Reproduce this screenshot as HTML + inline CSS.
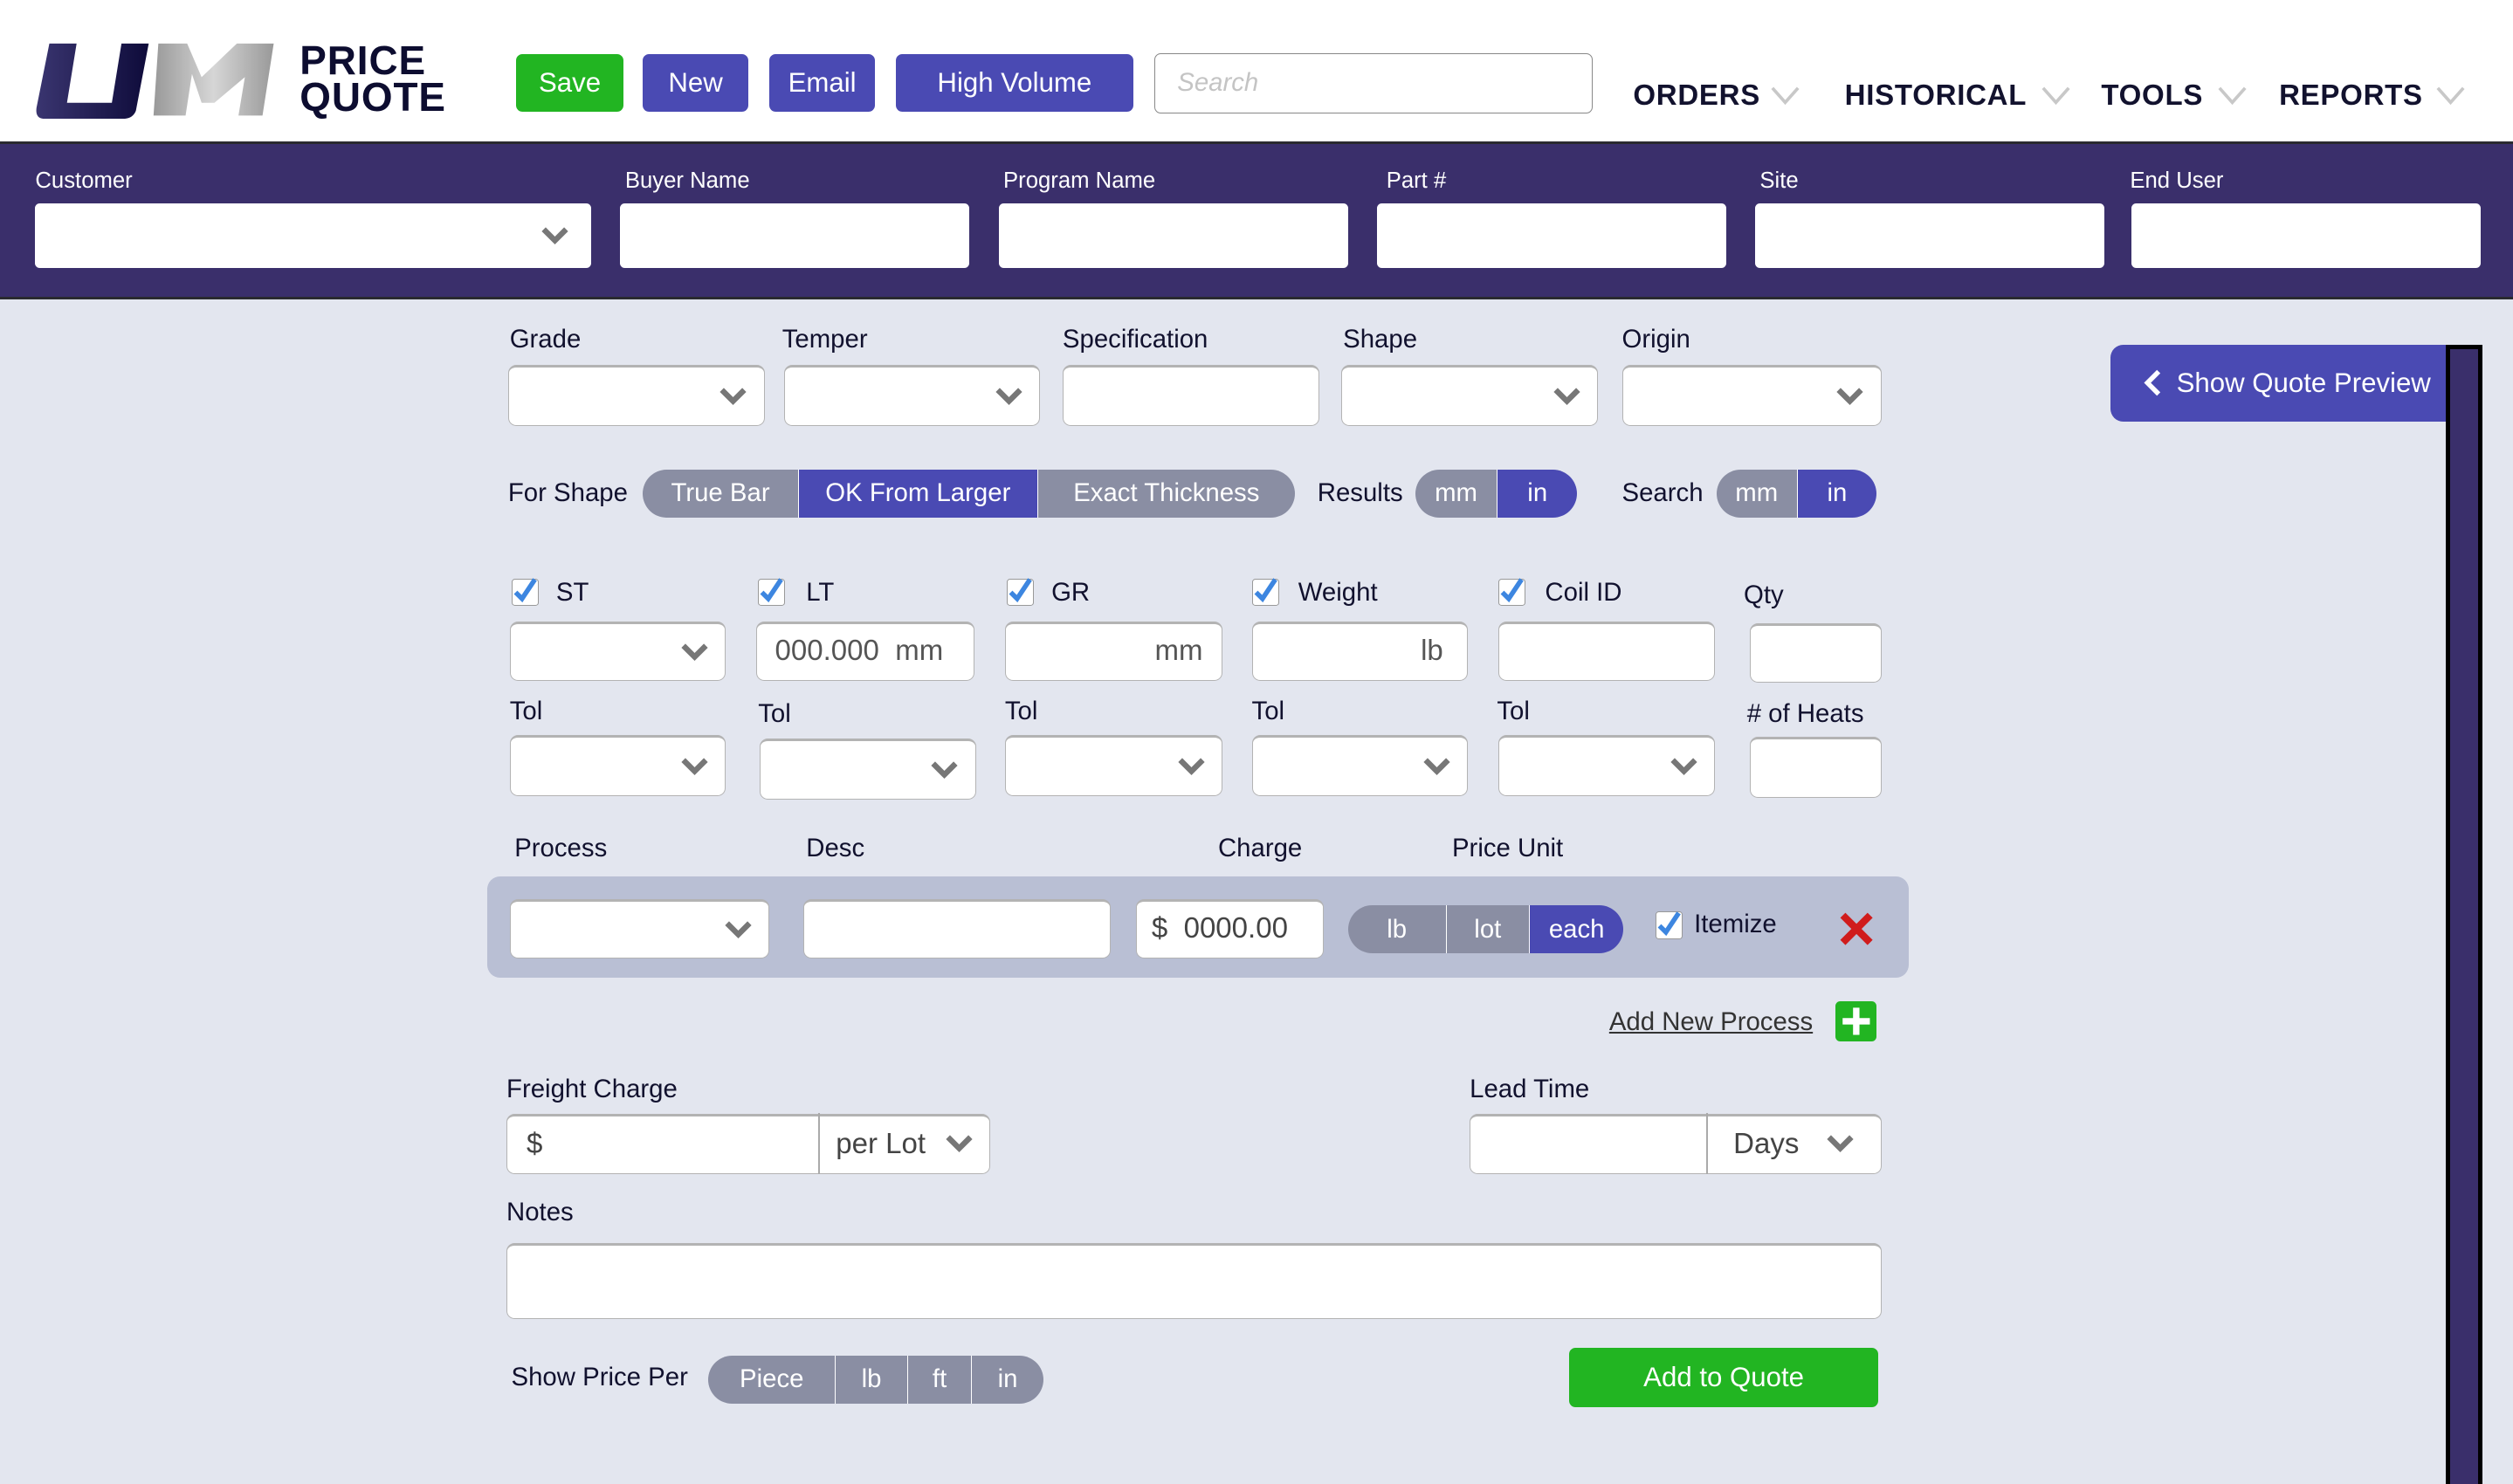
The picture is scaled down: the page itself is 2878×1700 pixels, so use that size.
<!DOCTYPE html>
<html><head><meta charset="utf-8"><style>
*{box-sizing:border-box;margin:0;padding:0}
html,body{width:2878px;height:1700px;overflow:hidden;background:#e3e6ef}
#w{zoom:1.8355;position:relative;width:1568px;height:927px;font-family:"Liberation Sans",sans-serif;color:#11112e}
.a{position:absolute}
.t{position:absolute;font-size:16px;line-height:20px;white-space:nowrap}
.in{position:absolute;background:#fff;border:1px solid #b3b3b3;border-top-width:2px;border-radius:5px}
.cv{position:absolute;right:10px;top:50%;margin-top:-6px;width:18px;height:12px}
.btn{position:absolute;color:#fff;font-size:17px;text-align:center;border-radius:4px}
.pill{position:absolute;display:flex;border-radius:16px;overflow:hidden;color:#fff;font-size:16px}
.pill div{background:#8a8ea3;display:flex;align-items:center;justify-content:center;border-left:1px solid #fff}
.pill div:first-child{border-left:none}
.pill .on{background:#4a4ab3}
.cb{position:absolute;width:17px;height:17px;border:1px solid #999;border-radius:2px;background:#fff}
.nav{position:absolute;top:49px;font-size:18px;font-weight:bold;letter-spacing:0.4px;color:#12122e}
.bl{position:absolute;color:#fff;font-size:14px;top:105px}
.bi{position:absolute;top:127px;height:40px;background:#fff;border-radius:3px}
</style></head><body><div id="w">
<svg width="0" height="0" style="position:absolute"><defs>
<symbol id="ch" viewBox="0 0 18 12"><path d="M2 2 L9 9 L16 2" fill="none" stroke="#777" stroke-width="3.5"/></symbol>
<symbol id="ck" viewBox="0 0 17 17"><path d="M3 9 L7 13 L15 1" fill="none" stroke="#3d86e0" stroke-width="3"/></symbol>
</defs></svg>
<!-- header -->
<div class="a" style="left:0;top:0;width:1568px;height:88px;background:#fff"></div>
<svg class="a" style="left:22px;top:26px" width="152" height="48" viewBox="0 0 152 48">
<defs><linearGradient id="g1" x1="0" x2="1"><stop offset="0" stop-color="#3a3570"/><stop offset="1" stop-color="#0e0b3a"/></linearGradient>
<linearGradient id="g2" x1="0" x2="1"><stop offset="0" stop-color="#999"/><stop offset=".5" stop-color="#d6d6d6"/><stop offset="1" stop-color="#999"/></linearGradient></defs>
<path d="M9 1 L26 1 L20 38 L48 38 L54 1 L71 1 L63 43 Q61 48 55 48 L6 48 Q0 48 1 41 Z" fill="url(#g1)"/>
<path d="M77 1 L95 1 L104 22 L126 1 L149 1 L142 46 L127 46 L131 22 L112 38 L104 38 L98 20 L94 46 L74 46 Z" fill="url(#g2)"/>
</svg>
<div class="a" style="left:187px;top:26px;font-size:25px;font-weight:bold;line-height:23px;letter-spacing:0.5px;color:#0d0d30">PRICE<br>QUOTE</div>
<div class="btn" style="left:322px;top:34px;width:67px;height:36px;line-height:36px;background:#22b522">Save</div>
<div class="btn" style="left:401px;top:34px;width:66px;height:36px;line-height:36px;background:#4a4ab3">New</div>
<div class="btn" style="left:480px;top:34px;width:66px;height:36px;line-height:36px;background:#4a4ab3">Email</div>
<div class="btn" style="left:559px;top:34px;width:148px;height:36px;line-height:36px;background:#4a4ab3">High Volume</div>
<div class="a" style="left:720px;top:33px;width:274px;height:38px;border:1px solid #888;border-radius:4px;color:#c4c4c4;font-style:italic;font-size:16px;line-height:36px;padding-left:14px">Search</div>
<div class="nav" style="left:1019px">ORDERS</div><svg class="a" style="left:1105px;top:54px" width="18" height="12"><path d="M1 1 L9 10 L17 1" fill="none" stroke="#c8c8c8" stroke-width="2"/></svg>
<div class="nav" style="left:1151px">HISTORICAL</div><svg class="a" style="left:1274px;top:54px" width="18" height="12"><path d="M1 1 L9 10 L17 1" fill="none" stroke="#c8c8c8" stroke-width="2"/></svg>
<div class="nav" style="left:1311px">TOOLS</div><svg class="a" style="left:1384px;top:54px" width="18" height="12"><path d="M1 1 L9 10 L17 1" fill="none" stroke="#c8c8c8" stroke-width="2"/></svg>
<div class="nav" style="left:1422px">REPORTS</div><svg class="a" style="left:1520px;top:54px" width="18" height="12"><path d="M1 1 L9 10 L17 1" fill="none" stroke="#c8c8c8" stroke-width="2"/></svg>
<!-- band -->
<div class="a" style="left:0;top:88px;width:1568px;height:99px;background:#3a2f6b;border-top:2px solid #2a2a30;border-bottom:2px solid #2a2a30"></div>
<div class="bl" style="left:22px">Customer</div><div class="bi" style="left:22px;width:347px"><svg class="cv" style="right:14px"><use href="#ch"/></svg></div>
<div class="bl" style="left:390px">Buyer Name</div><div class="bi" style="left:387px;width:218px"></div>
<div class="bl" style="left:626px">Program Name</div><div class="bi" style="left:623px;width:218px"></div>
<div class="bl" style="left:865px">Part #</div><div class="bi" style="left:859px;width:218px"></div>
<div class="bl" style="left:1098px">Site</div><div class="bi" style="left:1095px;width:218px"></div>
<div class="bl" style="left:1329px">End User</div><div class="bi" style="left:1330px;width:218px"></div>
<!-- right -->
<div class="a" style="left:1317px;top:215px;width:212px;height:48px;background:#4a4ab3;border-radius:8px 0 0 8px;color:#fff;font-size:17px;line-height:48px;padding-left:41px">Show Quote Preview</div>
<svg class="a" style="left:1336px;top:230px" width="14" height="18"><path d="M11 2 L4 9 L11 16" fill="none" stroke="#fff" stroke-width="3"/></svg>
<div class="a" style="left:1526px;top:215px;width:23px;height:712px;background:#3a2f6b;border:3px solid #000;border-bottom:none"></div>
<!-- grade row -->
<div class="t" style="left:318px;top:202px">Grade</div><div class="in" style="left:317px;top:228px;width:160px;height:38px"><svg class="cv"><use href="#ch"/></svg></div>
<div class="t" style="left:488px;top:202px">Temper</div><div class="in" style="left:489px;top:228px;width:160px;height:38px"><svg class="cv"><use href="#ch"/></svg></div>
<div class="t" style="left:663px;top:202px">Specification</div><div class="in" style="left:663px;top:228px;width:160px;height:38px"></div>
<div class="t" style="left:838px;top:202px">Shape</div><div class="in" style="left:837px;top:228px;width:160px;height:38px"><svg class="cv"><use href="#ch"/></svg></div>
<div class="t" style="left:1012px;top:202px">Origin</div><div class="in" style="left:1012px;top:228px;width:162px;height:38px"><svg class="cv"><use href="#ch"/></svg></div>
<!-- shape row -->
<div class="t" style="left:317px;top:298px">For Shape</div>
<div class="pill" style="left:401px;top:293px;width:407px;height:30px"><div style="width:97px">True Bar</div><div class="on" style="width:149px">OK From Larger</div><div style="width:161px">Exact Thickness</div></div>
<div class="t" style="left:822px;top:298px">Results</div>
<div class="pill" style="left:883px;top:293px;width:101px;height:30px"><div style="width:51px">mm</div><div class="on" style="width:50px">in</div></div>
<div class="t" style="left:1012px;top:298px">Search</div>
<div class="pill" style="left:1071px;top:293px;width:100px;height:30px"><div style="width:50px">mm</div><div class="on" style="width:50px">in</div></div>
<!-- checkbox row -->
<div class="cb" style="left:319px;top:361px"><svg width="17" height="17" style="margin:-1px"><use href="#ck"/></svg></div><div class="t" style="left:347px;top:360px">ST</div>
<div class="cb" style="left:473px;top:361px"><svg width="17" height="17" style="margin:-1px"><use href="#ck"/></svg></div><div class="t" style="left:503px;top:360px">LT</div>
<div class="cb" style="left:628px;top:361px"><svg width="17" height="17" style="margin:-1px"><use href="#ck"/></svg></div><div class="t" style="left:656px;top:360px">GR</div>
<div class="cb" style="left:781px;top:361px"><svg width="17" height="17" style="margin:-1px"><use href="#ck"/></svg></div><div class="t" style="left:810px;top:360px">Weight</div>
<div class="cb" style="left:935px;top:361px"><svg width="17" height="17" style="margin:-1px"><use href="#ck"/></svg></div><div class="t" style="left:964px;top:360px">Coil ID</div>
<div class="t" style="left:1088px;top:362px">Qty</div>
<div class="in" style="left:318px;top:388px;width:135px;height:37px"><svg class="cv"><use href="#ch"/></svg></div>
<div class="in" style="left:472px;top:388px;width:136px;height:37px;font-size:18px;color:#555;line-height:33px;padding-left:11px">000.000&nbsp; mm</div>
<div class="in" style="left:627px;top:388px;width:136px;height:37px;font-size:18px;color:#555;line-height:33px;text-align:right;padding-right:12px">mm</div>
<div class="in" style="left:781px;top:388px;width:135px;height:37px;font-size:18px;color:#555;line-height:33px;text-align:right;padding-right:15px">lb</div>
<div class="in" style="left:935px;top:388px;width:135px;height:37px"></div>
<div class="in" style="left:1092px;top:389px;width:82px;height:37px"></div>
<div class="t" style="left:318px;top:434px">Tol</div><div class="t" style="left:473px;top:436px">Tol</div><div class="t" style="left:627px;top:434px">Tol</div><div class="t" style="left:781px;top:434px">Tol</div><div class="t" style="left:934px;top:434px">Tol</div>
<div class="t" style="left:1090px;top:436px">#&nbsp;of Heats</div>
<div class="in" style="left:318px;top:459px;width:135px;height:38px"><svg class="cv"><use href="#ch"/></svg></div>
<div class="in" style="left:474px;top:461px;width:135px;height:38px"><svg class="cv"><use href="#ch"/></svg></div>
<div class="in" style="left:627px;top:459px;width:136px;height:38px"><svg class="cv"><use href="#ch"/></svg></div>
<div class="in" style="left:781px;top:459px;width:135px;height:38px"><svg class="cv"><use href="#ch"/></svg></div>
<div class="in" style="left:935px;top:459px;width:135px;height:38px"><svg class="cv"><use href="#ch"/></svg></div>
<div class="in" style="left:1092px;top:460px;width:82px;height:38px"></div>
<!-- process -->
<div class="t" style="left:321px;top:520px">Process</div><div class="t" style="left:503px;top:520px">Desc</div><div class="t" style="left:760px;top:520px">Charge</div><div class="t" style="left:906px;top:520px">Price Unit</div>
<div class="a" style="left:304px;top:547px;width:887px;height:63px;background:#b9bfd4;border-radius:8px"></div>
<div class="in" style="left:318px;top:561px;width:162px;height:37px"><svg class="cv"><use href="#ch"/></svg></div>
<div class="in" style="left:501px;top:561px;width:192px;height:37px"></div>
<div class="in" style="left:709px;top:561px;width:117px;height:37px;font-size:18px;color:#444;line-height:33px;padding-left:9px">$&nbsp; 0000.00</div>
<div class="pill" style="left:841px;top:565px;width:172px;height:30px"><div style="width:61px">lb</div><div style="width:52px">lot</div><div class="on" style="width:59px">each</div></div>
<div class="cb" style="left:1033px;top:569px"><svg width="17" height="17" style="margin:-1px"><use href="#ck"/></svg></div><div class="t" style="left:1057px;top:567px">Itemize</div>
<svg class="a" style="left:1147px;top:568px" width="23" height="23"><path d="M3 3 L20 20 M20 3 L3 20" stroke="#d01c1c" stroke-width="4.5"/></svg>
<div class="t" style="left:1004px;top:628px;color:#333;text-decoration:underline">Add New Process</div>
<div class="a" style="left:1145px;top:625px;width:26px;height:25px;background:#22b522;border-radius:3px"><svg width="26" height="25"><path d="M13 4 V21 M4.5 12.5 H21.5" stroke="#fff" stroke-width="4"/></svg></div>
<!-- freight -->
<div class="t" style="left:316px;top:670px">Freight Charge</div>
<div class="in" style="left:316px;top:695px;width:302px;height:38px;font-size:18px;color:#444;line-height:34px"><span style="position:absolute;left:12px">$</span><div class="a" style="left:194px;top:-2px;width:1px;height:38px;background:#aaa"></div><span style="position:absolute;left:205px">per Lot</span><svg class="cv" style="margin-top:-7px"><use href="#ch"/></svg></div>
<div class="t" style="left:917px;top:670px">Lead Time</div>
<div class="in" style="left:917px;top:695px;width:257px;height:38px;font-size:18px;color:#444;line-height:34px"><div class="a" style="left:147px;top:-2px;width:1px;height:38px;background:#aaa"></div><span style="position:absolute;left:164px">Days</span><svg class="cv" style="right:16px;margin-top:-7px"><use href="#ch"/></svg></div>
<div class="t" style="left:316px;top:747px">Notes</div>
<div class="in" style="left:316px;top:776px;width:858px;height:47px"></div>
<div class="t" style="left:319px;top:850px">Show Price Per</div>
<div class="pill" style="left:442px;top:846px;width:209px;height:30px"><div style="width:79px">Piece</div><div style="width:45px">lb</div><div style="width:40px">ft</div><div style="width:45px">in</div></div>
<div class="btn" style="left:979px;top:841px;width:193px;height:37px;line-height:37px;background:#22b522">Add to Quote</div>
</div></body></html>
